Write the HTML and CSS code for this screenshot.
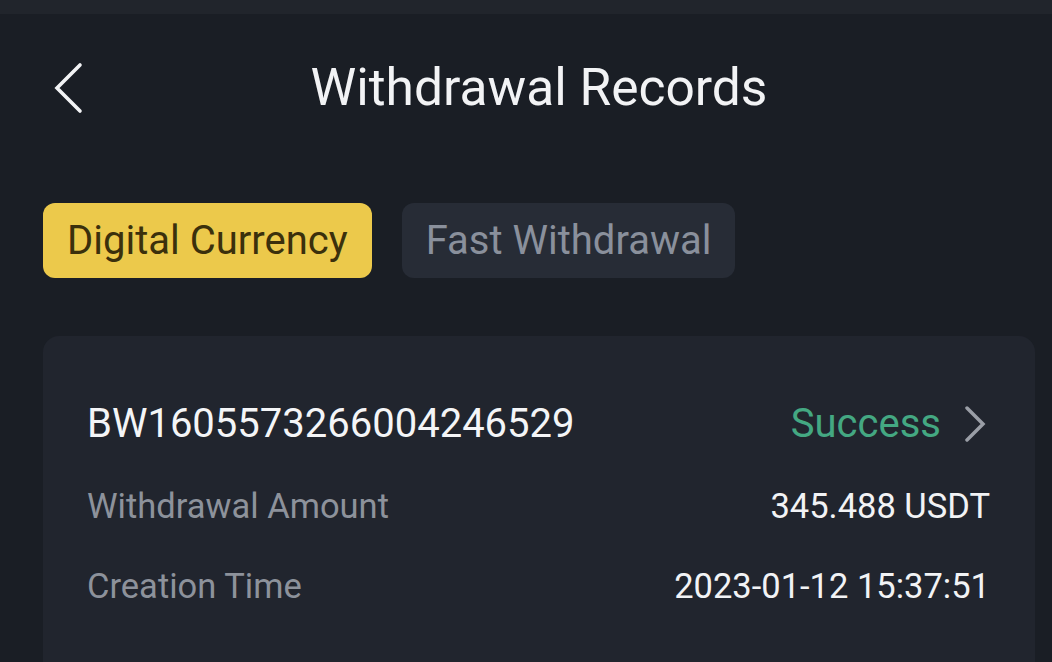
FILE: index.html
```html
<!DOCTYPE html>
<html lang="en">
<head>
	<meta charset="UTF-8">
	<meta name="viewport" content="width=device-width, initial-scale=1.0">
	<title>Withdrawal Records</title>
	<link rel="stylesheet" href="styles.css">
</head>
<body>
	<div class="statusbar"></div>
	<div class="page">
		<div class="header">
			<span class="back">
				<svg width="30" height="52" viewBox="0 0 30 52"><path d="M27 3 L4 26 L27 49" fill="none" stroke="#f2f3f5" stroke-width="3.6" stroke-linecap="round" stroke-linejoin="miter"/></svg>
			</span>
			<h1>Withdrawal Records</h1>
		</div>
		<div class="tabs">
			<span class="tab active">Digital Currency</span>
			<span class="tab">Fast Withdrawal</span>
		</div>
		<div class="card">
			<div class="row top">
				<span class="order">BW1605573266004246529</span>
				<span class="status">Success
					<svg width="24" height="36" viewBox="0 0 24 36"><path d="M4 2 L20 18 L4 34" fill="none" stroke="#9a9ea6" stroke-width="3.5" stroke-linecap="round"/></svg>
				</span>
			</div>
			<div class="row">
				<span class="label">Withdrawal Amount</span>
				<span class="value">345.488 USDT</span>
			</div>
			<div class="row">
				<span class="label">Creation Time</span>
				<span class="value">2023-01-12 15:37:51</span>
			</div>
		</div>
	</div>
</body>
</html>
```
FILE: styles.css
```css
body{
	margin: 0;
	height: 662px;
	background-color: #1a1e25;
	font-family: Roboto, "Liberation Sans", sans-serif;
	color: #f2f3f5;
	overflow: hidden;
}
.statusbar{
	height: 14px;
	background-color: #21252c;
}
.page{
	padding: 0 17px 0 43px;
}
.header{
	position: relative;
	height: 150px;
	display: flex;
	align-items: center;
	justify-content: center;
}
.back{
	position: absolute;
	left: 10px;
	top: 48px;
}
h1{
	margin: 0;
	font-size: 51.5px;
	font-weight: 400;
	padding-bottom: 4px;
}
.tabs{
	display: flex;
	gap: 30px;
	margin-top: 39px;
}
.tab{
	display: flex;
	align-items: center;
	height: 75px;
	padding: 0 24px;
	border-radius: 12px;
	background-color: #272c36;
	color: #8a909c;
	font-size: 40px;
}
.tab.active{
	background-color: #ecc94b;
	color: #3b300c;
}
.card{
	margin-top: 58px;
	background-color: #21252e;
	border-radius: 16px 16px 0 0;
	padding: 45px 45px 36px 44px;
}
.row{
	display: flex;
	justify-content: space-between;
	align-items: center;
	font-size: 34.5px;
	height: 80px;
}
.row.top{
	height: 85px;
	font-size: 40px;
}
.order{
	color: #f4f5f7;
}
.status{
	display: flex;
	align-items: center;
	gap: 22px;
	color: #44a882;
	margin-right: 3px;
}
.label{
	color: #8d929b;
}
.value{
	color: #f2f3f5;
}
```
